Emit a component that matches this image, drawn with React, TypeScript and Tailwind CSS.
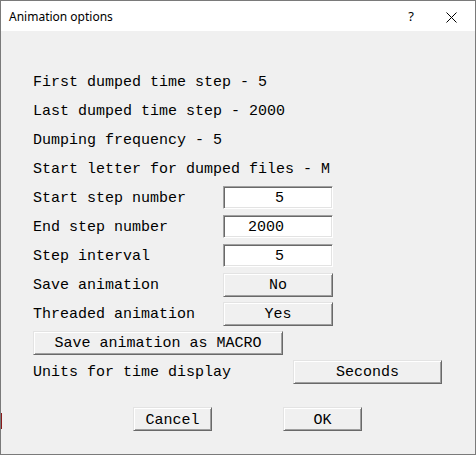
import React from 'react';

const mono = "font-['Liberation_Mono','DejaVu_Sans_Mono',monospace] text-[15px] text-black";

const btn =
    'flex items-center justify-center h-[24px] pt-[2px] bg-[#f0f0f0] border border-t-[#e3e3e3] border-l-[#e3e3e3] border-b-[#696969] border-r-[#696969] shadow-[inset_1px_1px_#ffffff,inset_-1px_-1px_#a0a0a0] leading-none';

const field =
    'flex items-center h-[23px] w-[110px] pt-[2px] bg-white border border-t-[#a0a0a0] border-l-[#a0a0a0] border-b-white border-r-white shadow-[inset_1px_1px_#696969,inset_-1px_-1px_#e3e3e3] pl-[24px] whitespace-pre leading-none';

function Row({ label, children }: { label: string; children?: React.ReactNode }) {
    return (
        <div className="flex items-center h-[29px]">
            <span className="w-[190px] pt-[4px] whitespace-pre">{label}</span>
            {children}
        </div>
    );
}

export default function App() {
    return (
        <div className="relative w-[476px] h-[455px] bg-[#f0f0f0] border border-[#7a7a7a] flex flex-col overflow-hidden">
            {/* Title bar */}
            <div className="h-[30px] bg-white flex items-center shrink-0 pt-[2px]">
                <span className="ml-[8px] font-['Noto_Sans','Open_Sans',sans-serif] text-[12px] text-black">Animation options</span>
                <span className="ml-auto w-[20px] text-center font-['Noto_Sans',sans-serif] text-[13px] text-black">?</span>
                <div className="w-[46px] ml-[7px] mr-[1px] flex items-center justify-center">
                    <svg width="11" height="11" viewBox="0 0 11 11">
                        <path d="M0.5 0.5L10.5 10.5M10.5 0.5L0.5 10.5" stroke="#000" strokeWidth="1" />
                    </svg>
                </div>
            </div>

            {/* Body */}
            <div className={`flex flex-col pt-[36px] pl-[32px] ${mono}`}>
                <Row label="First dumped time step - 5" />
                <Row label="Last dumped time step - 2000" />
                <Row label="Dumping frequency - 5" />
                <Row label="Start letter for dumped files - M" />
                <Row label="Start step number">
                    <div className={field}>{'   5'}</div>
                </Row>
                <Row label="End step number">
                    <div className={field}>2000</div>
                </Row>
                <Row label="Step interval">
                    <div className={field}>{'   5'}</div>
                </Row>
                <Row label="Save animation">
                    <div className={`${btn} w-[110px]`}>No</div>
                </Row>
                <Row label="Threaded animation">
                    <div className={`${btn} w-[110px]`}>Yes</div>
                </Row>
                <div className="flex items-center h-[29px]">
                    <div className={`${btn} w-[250px]`}>Save animation as MACRO</div>
                </div>
                <div className="flex items-center h-[29px]">
                    <span className="w-[260px] pt-[4px]">Units for time display</span>
                    <div className={`${btn} w-[149px]`}>Seconds</div>
                </div>
                <div className="flex items-center mt-[21px] pl-[100px] gap-[71px]">
                    <div className={`${btn} w-[79px]`}>Cancel</div>
                    <div className={`${btn} w-[79px]`}>OK</div>
                </div>
            </div>

            <div className="absolute left-[-1px] top-[412px] w-[2px] h-[16px] bg-[#8b1a1a]" />
        </div>
    );
}
